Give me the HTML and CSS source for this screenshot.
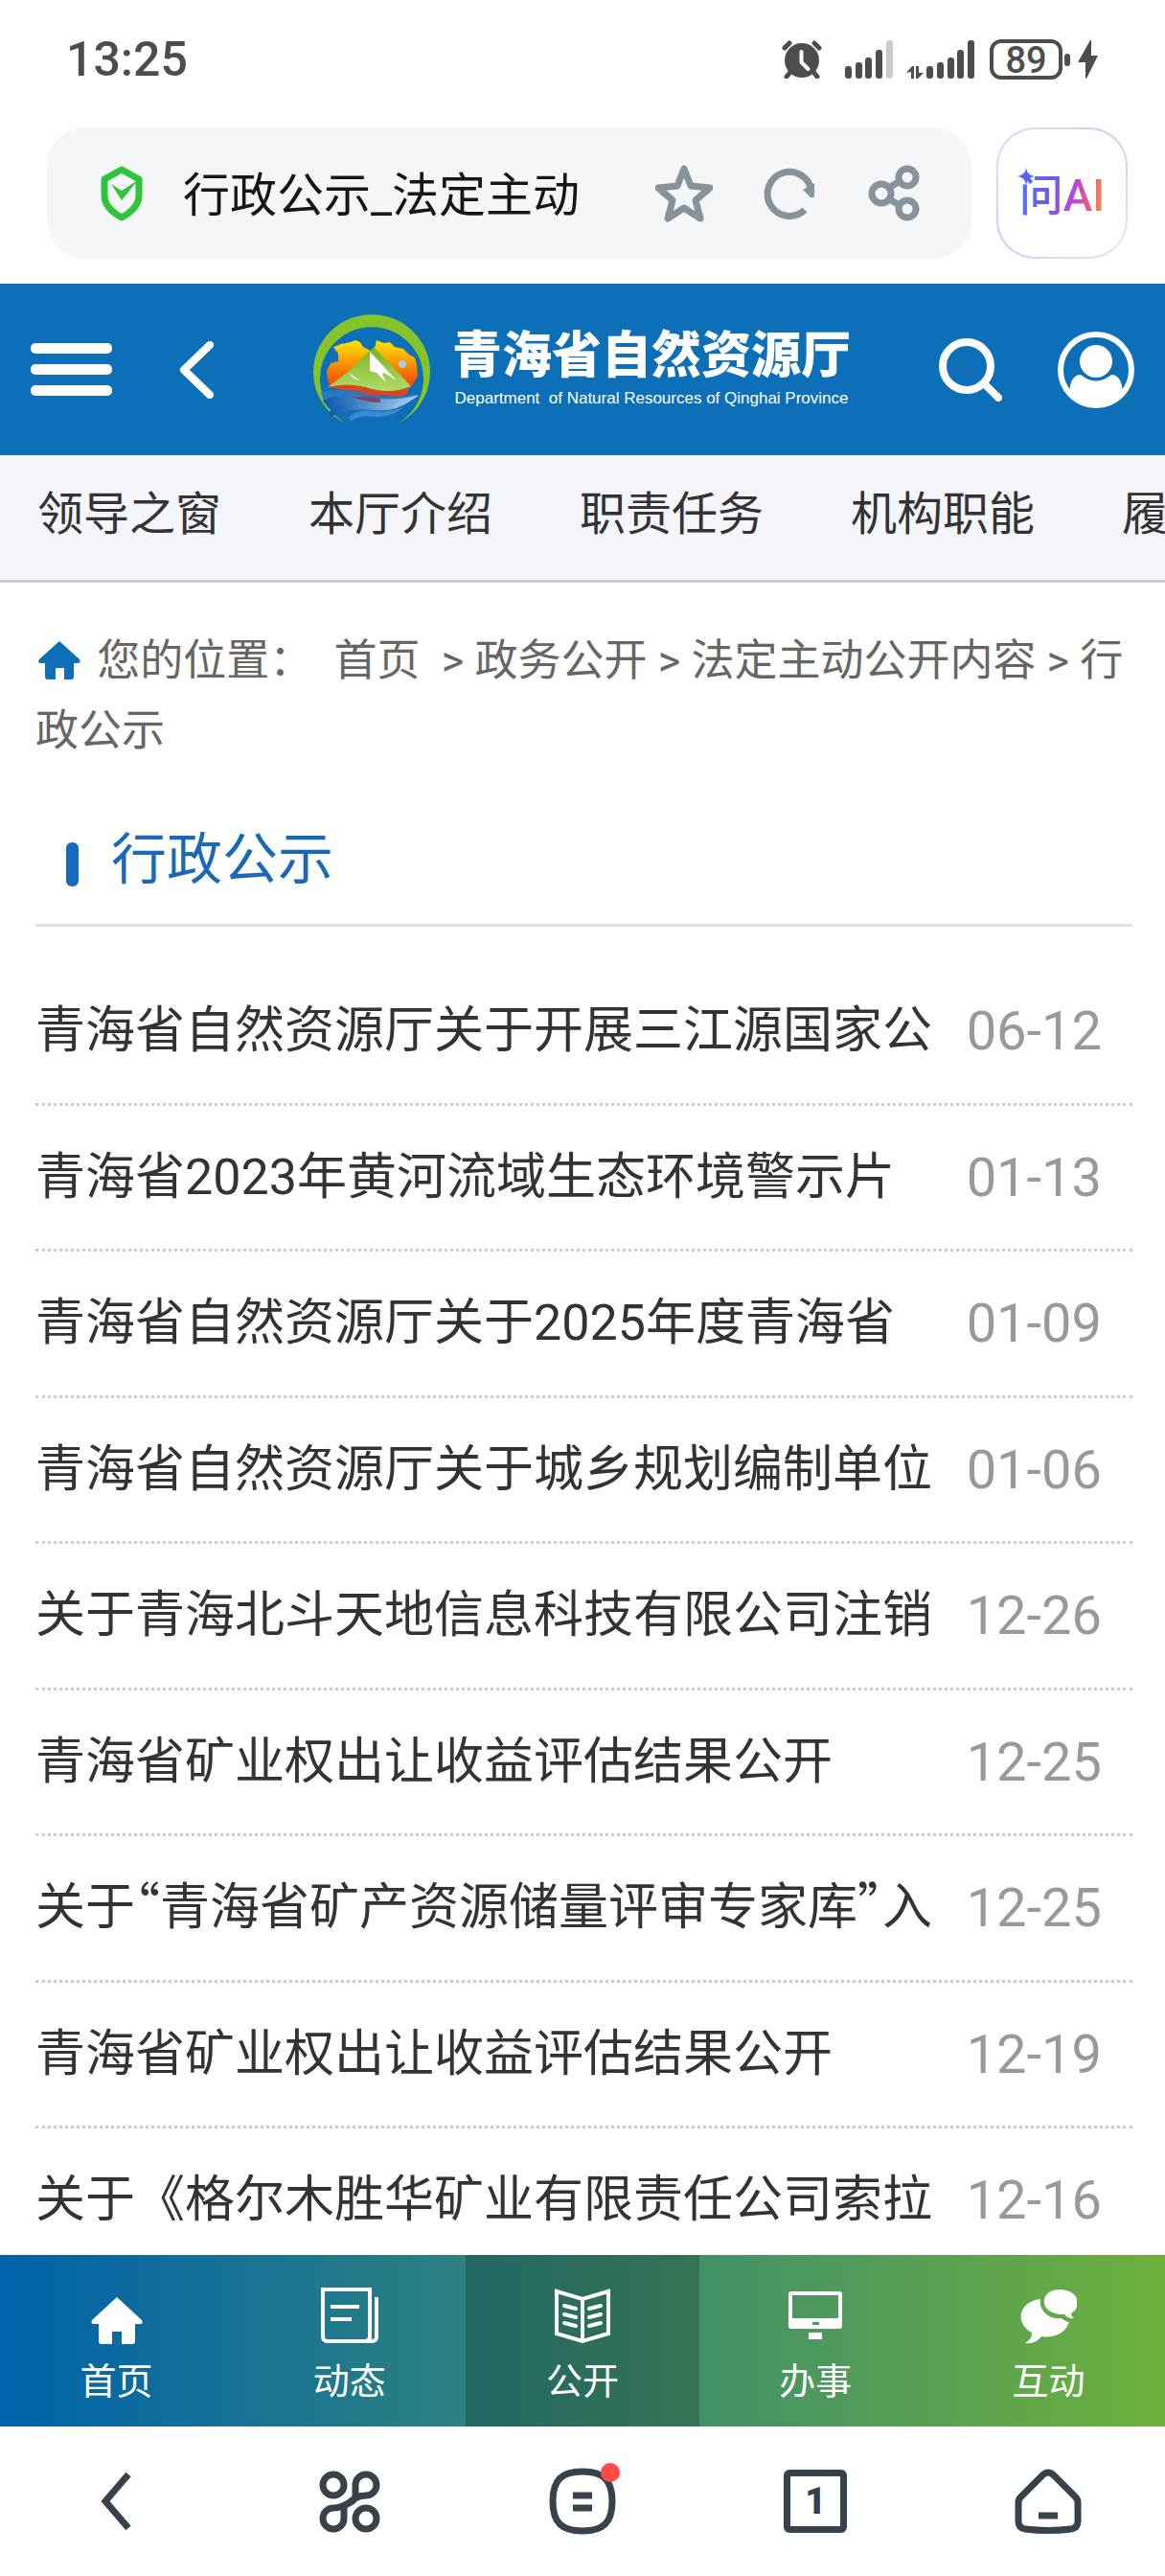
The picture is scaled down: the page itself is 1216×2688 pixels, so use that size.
FILE: index.html
```
<!DOCTYPE html>
<html lang="zh-CN">
<head>
    <meta charset="UTF-8">
    <meta name="viewport" content="width=device-width, initial-scale=1.0">
    <title>行政公示_法定主动公开内容</title>
    <link rel="stylesheet" href="styles.css">
</head>
<body>
    <!-- Строка состояния -->
    <div class="status">
        <span class="time">13:25</span>
        <div class="status-icons">
            <svg class="alarm" width="42" height="40" viewBox="0 0 42 40">
                <circle cx="21" cy="21" r="18"/>
                <path d="M3 8l5-5M39 8l-5-5M9 33l-4 5M33 33l4 5" stroke="#4d4d4d" stroke-width="5" stroke-linecap="round"/>
                <path d="M20.500 12v11l7 7" fill="none" stroke="#fff" stroke-width="4" stroke-linecap="round" stroke-linejoin="round"/>
            </svg>
            <svg class="signal" width="50" height="40" viewBox="0 0 50 40">
                <rect x="0" y="27" width="7" height="13" rx="3"/>
                <rect x="11" y="23" width="7" height="17" rx="3"/>
                <rect x="21" y="18" width="7" height="22" rx="3"/>
                <rect x="32" y="10" width="7" height="30" rx="3"/>
                <rect x="43" y="0" width="7" height="40" rx="3" fill="#ccc"/>
            </svg>
            <svg class="signal data" width="71" height="40" viewBox="0 0 71 40">
                <path d="M0 34l6-7h2v13H5v-7zM10 27h3v7h5l-6 6h-2z"/>
                <rect x="21" y="27" width="7" height="13" rx="3"/>
                <rect x="32" y="23" width="7" height="17" rx="3"/>
                <rect x="43" y="18" width="7" height="22" rx="3"/>
                <rect x="53" y="10" width="7" height="30" rx="3"/>
                <rect x="64" y="0" width="7" height="40" rx="3"/>
            </svg>
            <div class="battery">89</div>
            <svg class="bolt" width="36" height="40" viewBox="0 0 36 40">
                <rect x="0" y="14" width="6" height="13" rx="3"/>
                <path d="M28 0v16h7L23 40h-1V23h-8L27 0z"/>
            </svg>
        </div>
    </div>

    <!-- Адресная строка -->
    <div class="browser">
        <div class="address">
            <svg class="shield" width="44" height="58" viewBox="0 0 44 58">
                <path d="M22 4L40 14v17c0 10-9 18-18 23C13 49 4 41 4 31V14z" fill="none" stroke="#2fc43a" stroke-width="7" stroke-linejoin="round"/>
                <path d="M11 19l11 7 17-11-17 21z" fill="#2fc43a"/>
            </svg>
            <span class="address-text">行政公示_法定主动</span>
            <button class="tool" aria-label="收藏">
                <svg width="60" height="60" viewBox="0 0 60 60"><path d="M30 4l7 18 20 2-15 13 5 19-17-11-17 11 5-19L3 24l20-2z"/></svg>
            </button>
            <button class="tool" aria-label="刷新">
                <svg width="60" height="60" viewBox="0 0 60 60"><path d="M46 47A23 23 0 1 1 53 28"/><path class="solid" d="M44 26l12-7v12q0 4-4 3z"/></svg>
            </button>
            <button class="tool" aria-label="分享">
                <svg width="60" height="60" viewBox="0 0 60 60"><circle cx="16" cy="30" r="10"/><circle cx="43" cy="13" r="9"/><circle cx="43" cy="46" r="9"/><path d="M24 24l11-7M24 36l11 6"/></svg>
            </button>
        </div>
        <button class="ai"><span>问AI</span>
            <svg class="spark" width="18" height="18" viewBox="0 0 18 18"><path d="M9 0q1 8 9 9-8 1-9 9-1-8-9-9 8-1 9-9z" fill="#5a63f5"/></svg>
        </button>
    </div>

    <header>
        <button class="menu" aria-label="菜单"><i></i><i></i><i></i></button>
        <a href="#" class="back" aria-label="返回">
            <svg width="36" height="60" viewBox="0 0 36 60"><path d="M32 4L5 30l27 26" fill="none" stroke="#fff" stroke-width="8" stroke-linejoin="round" stroke-linecap="round"/></svg>
        </a>
        <a href="#" class="logo">
            <svg width="124" height="116" viewBox="0 0 124 116">
                <defs>
                    <linearGradient id="sun" x1="0" y1="0" x2="0" y2="1"><stop offset="0" stop-color="#ffe600"/><stop offset="1" stop-color="#f23c08"/></linearGradient>
                    <linearGradient id="hill" x1="0" y1="0" x2="0" y2="1"><stop offset="0" stop-color="#6fb820"/><stop offset="1" stop-color="#b4d96a"/></linearGradient>
                    <linearGradient id="wave"><stop offset="0" stop-color="#0a57ae"/><stop offset="1" stop-color="#a9d0f0"/></linearGradient>
                </defs>
                <path d="M35 114A61 60 0 1 1 89 114A54 54 0 1 0 35 114z" fill="#86c32b"/>
                <path d="M18 75l-2-8-1-8 4-8 8-2 0-8-5-7 8-3 10-2 5-2 5 2 3 5 8 4 4-3 2-8 8 3 6-1 5 5 9 2 6 6 6 3 2 7 1 12-6 11-7 2z" fill="url(#sun)"/>
                <path d="M16 76l24-18 24-24 39 41q-22 10-48 1-18-4-39 0z" fill="url(#hill)"/>
                <path d="M60 39l28 30-13-8-2 1 4 9-10-10-7-2zM38 61l13 9-9-4z" fill="#fff"/>
                <path d="M17 76q18-5 37 0 25 8 48 0l-4 8q-13 4-22 0-22 4-39-3-10-3-20-5z" fill="#d9471c"/>
                <path d="M9 81q24-6 46 2 28 6 55-1-10 10-32 11-30-2-66-2z" fill="#2678c2"/>
                <path d="M11 90q26-11 46-3 30 4 54-3-14 14-44 12-26-5-50 2z" fill="url(#wave)"/>
                <path d="M17 102q24-16 44-10 22 4 42-2-16 12-38 10-24-3-46 6z" fill="url(#wave)"/>
                <path d="M38 107q12-9 26-6 18 2 32-5-12 12-30 11-16-3-26 5z" fill="#3b8ad0"/>
                <path d="M41 86q15-1 30 2v4q-14 0-30-6z" fill="#874066"/>
                <circle cx="94" cy="52" r="4" fill="#a9cbd8"/>
            </svg>
            <span class="logo-text">
                <strong>青海省自然资源厅</strong>
                <small>Department&nbsp; of Natural Resources of Qinghai Province</small>
            </span>
        </a>
        <button class="search" aria-label="搜索">
            <svg width="66" height="66" viewBox="0 0 66 66"><circle cx="29" cy="29" r="25" fill="none" stroke="#fff" stroke-width="8"/><path d="M48 48l14 14" stroke="#fff" stroke-width="8" stroke-linecap="round"/></svg>
        </button>
        <a href="#" class="user" aria-label="用户">
            <svg width="80" height="80" viewBox="0 0 80 80"><circle cx="40" cy="40" r="37" fill="none" stroke="#fff" stroke-width="6"/><circle cx="40" cy="31" r="17" fill="#fff"/><path d="M12 62q2-17 12-17 16 13 32 0 10 0 12 17-10 15-28 15T12 62z" fill="#fff"/></svg>
        </a>
    </header>

    <nav class="tabs">
        <a href="#">领导之窗</a>
        <a href="#">本厅介绍</a>
        <a href="#">职责任务</a>
        <a href="#">机构职能</a>
        <a href="#">履职依据</a>
    </nav>

    <main>
        <div class="crumbs">
            <svg width="44" height="40" viewBox="0 0 44 40"><path d="M22 0l21 19q2 4-2 4h-4v14q0 3-3 3h-7V28h-9v12h-8q-3 0-3-3V23H2q-3 0-1-4z" fill="#0c6fb8"/></svg>
            您的位置：&nbsp; <a href="#">首页</a>&nbsp; &gt; <a href="#">政务公开</a> &gt; <a href="#">法定主动公开内容</a> &gt; <a href="#">行政公示</a>
        </div>
        <h1>行政公示</h1>
        <ul class="list">
            <li><a href="#">青海省自然资源厅关于开展三江源国家公</a><span>06-12</span></li>
            <li><a href="#">青海省2023年黄河流域生态环境警示片</a><span>01-13</span></li>
            <li><a href="#">青海省自然资源厅关于2025年度青海省</a><span>01-09</span></li>
            <li><a href="#">青海省自然资源厅关于城乡规划编制单位</a><span>01-06</span></li>
            <li><a href="#">关于青海北斗天地信息科技有限公司注销</a><span>12-26</span></li>
            <li><a href="#">青海省矿业权出让收益评估结果公开</a><span>12-25</span></li>
            <li><a href="#">关于<q>青海省矿产资源储量评审专家库</q>入</a><span>12-25</span></li>
            <li><a href="#">青海省矿业权出让收益评估结果公开</a><span>12-19</span></li>
            <li><a href="#">关于《格尔木胜华矿业有限责任公司索拉</a><span>12-16</span></li>
        </ul>
    </main>

    <nav class="bottom">
        <a href="#">
            <svg width="60" height="60" viewBox="0 0 60 60"><path d="M30 11l26 24q2 4-2 4h-5v18q0 3-3 3H35V47H25v13H14q-3 0-3-3V39H6q-4 0-2-4z"/></svg>
            首页
        </a>
        <a href="#">
            <svg width="60" height="60" viewBox="0 0 60 60"><g class="line"><path d="M2 3h49v49q0 5-5 5H7q-5 0-5-5zM58 11v41q0 5-5 5h-7"/><path d="M10 21h30M10 34h22"/></g></svg>
            动态
        </a>
        <a href="#" class="active">
            <svg width="60" height="60" viewBox="0 0 60 60"><g class="line"><path d="M3 5l27 8 27-8v44l-27 8-27-8zM30 13v44"/><path d="M11 20l12 3M11 29l12 3M11 38l12 3M37 23l12-3M37 32l12-3M37 41l12-3" stroke-linecap="round"/></g></svg>
            公开
        </a>
        <a href="#">
            <svg width="60" height="60" viewBox="0 0 60 60"><path fill-rule="evenodd" d="M5 5h50q3 0 3 3v33q0 3-3 3H5q-3 0-3-3V8q0-3 3-3zM6 9v24h48V9zM27 37v3h7v-3zM23 48h14v7H23z"/></svg>
            办事
        </a>
        <a href="#">
            <svg width="60" height="60" viewBox="0 0 60 60"><path d="M42 3c22 1 23 19 12 25q0 3 3 5-6 1-10-4C19 30 20 3 42 3z"/><path d="M22 13c-2 14 11 22 22 20 3 3 5 3 8 4-4 12-16 17-29 15-4 5-9 8-17 7 5-3 7-6 7-11C-6 38 0 15 22 13z"/></svg>
            互动
        </a>
    </nav>

    <!-- Панель браузера -->
    <div class="toolbar">
        <button aria-label="后退"><svg width="70" height="70" viewBox="0 0 70 70"><path d="M47 7L23 35l24 28"/></svg></button>
        <button aria-label="应用"><svg width="70" height="70" viewBox="0 0 70 70"><circle cx="18" cy="18" r="11"/><circle cx="52" cy="53" r="11"/><path d="M41 29V18a11 11 0 1 1 11 11c-8 0-12 3-17 7-5 3-9 6-17 6a11 11 0 1 0 11 11V42c0-5 12-5 12-13"/></svg></button>
        <button aria-label="消息"><svg width="70" height="70" viewBox="0 0 70 70"><path d="M35 4c22 0 31 9 31 31s-9 31-31 31S4 57 4 35 13 4 35 4z"/><path d="M25 29h20M25 42h20"/></svg><i class="dot"></i></button>
        <button aria-label="标签页"><span class="pages">1</span></button>
        <button aria-label="主页"><svg width="70" height="70" viewBox="0 0 70 70"><path d="M29 8q6-6 12 0l22 22q3 3 3 6v20q0 7-7 8-24 3-48 0-7-1-7-8V36q0-3 3-6z"/><path d="M25 50h20"/></svg></button>
    </div>
</body>
</html>
```
FILE: styles.css
```
* {
    box-sizing: border-box;
}
body {
    display: flex;
    flex-direction: column;
    height: 100vh;
    margin: 0;
    font-family: Roboto, "Noto Sans CJK SC", sans-serif;
    color: #333;
    background-color: #fff;
    overflow: hidden;
}
a {
    color: inherit;
    text-decoration: none;
}
button {
    padding: 0;
    border: none;
    background: none;
    font-family: inherit;
    cursor: pointer;
}
svg {
    display: block;
    flex: none;
}
.status {
    display: flex;
    justify-content: space-between;
    align-items: center;
    height: 123px;
    padding: 0 69px;
    color: #4d4d4d;
    fill: #4d4d4d;
}
.time {
    font-size: 50px;
    font-weight: 500;
}
.status-icons {
    display: flex;
    align-items: center;
}
.signal {
    margin-left: 24px;
}
.signal.data {
    margin-left: 14px;
}
.battery {
    width: 76px;
    height: 42px;
    margin: 0 2px 0 16px;
    border: 4px solid #4d4d4d;
    border-radius: 12px;
    font-size: 38px;
    font-weight: 500;
    line-height: 36px;
    text-align: center;
}
.browser {
    display: flex;
    gap: 26px;
    height: 173px;
    padding: 10px 39px 26px 49px;
}
.address {
    display: flex;
    flex: 1;
    align-items: center;
    padding: 0 50px 0 56px;
    border-radius: 40px;
    background-color: #f4f6f8;
}
.address-text {
    flex: 1;
    margin-left: 42px;
    padding-bottom: 4px;
    font-size: 49px;
    color: #14171a;
    white-space: nowrap;
}
.tool {
    margin-left: 50px;
}
.tool svg {
    fill: none;
    stroke: #86939a;
    stroke-width: 7;
    stroke-linejoin: round;
}
.tool .solid {
    fill: #86939a;
    stroke: none;
}
.ai {
    position: relative;
    width: 137px;
    padding-bottom: 4px;
    border: 2px solid transparent;
    border-radius: 40px;
    background: linear-gradient(#fff, #fff) padding-box, linear-gradient(135deg, #cfe6fa, #dcc8f2 40%, #e4d0f2 70%, #f8e2ee) border-box;
}
.ai span {
    font-size: 46px;
    font-weight: 500;
    color: transparent;
    background: linear-gradient(100deg, #4a7af8, #6a5cf0 35%, #b048e0 60%, #ee5a80 80%, #f8a030);
    background-clip: text;
}
.spark {
    position: absolute;
    left: 20px;
    top: 40px;
}
header {
    display: flex;
    align-items: center;
    height: 179px;
    padding: 0 32px;
    background-color: #0c6fb8;
}
.menu {
    display: flex;
    flex-direction: column;
    gap: 11px;
    width: 85px;
}
.menu i {
    height: 11px;
    border-radius: 5px;
    background-color: #fff;
}
.back {
    margin-left: 70px;
}
.logo {
    display: flex;
    align-items: center;
    margin: 0 auto 0 103px;
    color: #fff;
}
.logo-text {
    display: flex;
    flex-direction: column;
    margin-left: 22px;
}
.logo-text strong {
    font-size: 52px;
    font-weight: 900;
    line-height: 60px;
    white-space: nowrap;
}
.logo-text small {
    font-family: "Liberation Sans", sans-serif;
    font-size: 17px;
    line-height: 28px;
    text-align: center;
    white-space: nowrap;
}
.user {
    margin-left: 58px;
}
.tabs {
    display: flex;
    gap: 91px;
    height: 133px;
    padding: 0 39px;
    border-bottom: 3px solid #ccc;
    background-color: #f5f6fb;
    font-size: 48px;
    line-height: 124px;
    white-space: nowrap;
    overflow: hidden;
}
main {
    flex: 1;
    min-height: 0;
    padding: 45px 34px 0 37px;
    overflow: hidden;
}
.crumbs {
    font-size: 45px;
    line-height: 73px;
    color: #666;
}
.crumbs svg {
    display: inline-block;
    margin: 0 6px 0 3px;
    vertical-align: -4px;
}
h1 {
    display: flex;
    align-items: center;
    height: 148px;
    margin: 20px 0 0;
    padding-left: 32px;
    border-bottom: 3px solid #e1e1e1;
    font-size: 58px;
    font-weight: normal;
    color: #1a69b8;
}
h1::before {
    content: "";
    width: 13px;
    height: 46px;
    margin: 20px 34px 0 0;
    border-radius: 6px;
    background-color: #156ac0;
}
.list {
    margin: 34px 0 0;
    padding: 0;
    list-style: none;
}
.list li {
    display: flex;
    justify-content: space-between;
    height: 153px;
    padding-right: 32px;
    border-bottom: 3px dotted #ccc;
    font-size: 52px;
    line-height: 150px;
    white-space: nowrap;
}
.list li:nth-child(even) {
    height: 152px;
}
.list span {
    font-size: 56px;
    color: #999;
}
.list q {
    quotes: "“" "”";
}
.list q::before,
.list q::after {
    font-family: "Noto Sans CJK SC", sans-serif;
    font-feature-settings: "halt";
    line-height: 1;
}
.bottom {
    display: flex;
    height: 179px;
    background: linear-gradient(90deg, #0062ab, #6eb03c);
}
.bottom a {
    display: flex;
    flex: 1;
    flex-direction: column;
    align-items: center;
    padding-top: 33px;
    font-size: 38px;
    line-height: 78px;
    color: #fff;
}
.bottom .active {
    background-color: rgba(0, 0, 0, 0.2);
}
.bottom svg {
    fill: #fff;
}
.bottom .line {
    fill: none;
    stroke: #fff;
    stroke-width: 4;
}
.toolbar {
    display: flex;
    height: 156px;
    background-color: #fff;
}
.toolbar button {
    position: relative;
    display: flex;
    flex: 1;
    align-items: center;
    justify-content: center;
}
.toolbar svg {
    fill: none;
    stroke: #37424a;
    stroke-width: 7;
}
.pages {
    width: 66px;
    height: 66px;
    border: 7px solid #37424a;
    border-radius: 6px;
    font-size: 38px;
    font-weight: 900;
    line-height: 52px;
    color: #37424a;
}
.dot {
    position: absolute;
    top: 38px;
    left: 50%;
    width: 20px;
    height: 20px;
    margin-left: 19px;
    border-radius: 50%;
    background-color: #ff4a4a;
}
```
